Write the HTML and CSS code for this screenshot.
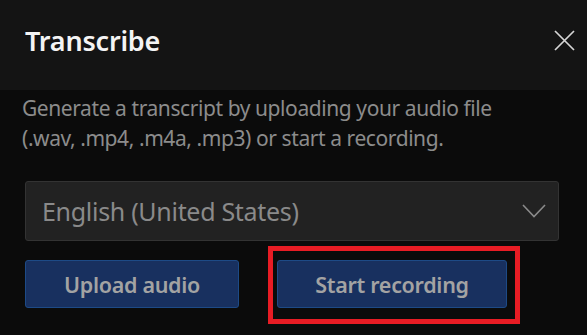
FILE: index.html
```html
<!DOCTYPE html>
<html lang="en">
<head>
    <meta charset="UTF-8">
    <meta name="viewport" content="width=device-width, initial-scale=1.0">
    <title>Transcribe</title>
    <link rel="stylesheet" href="styles.css">
</head>
<body>
    <div class="header">
        <h2>Transcribe</h2>
        <button class="close" aria-label="Close">
            <svg width="21" height="21" viewBox="0 0 21 21">
                <path d="M1 1 L20 20 M20 1 L1 20" stroke="#d6d6d6" stroke-width="1.7" fill="none"/>
            </svg>
        </button>
    </div>
    <div class="content">
        <p class="desc">Generate a transcript by uploading your audio file (.wav, .mp4, .m4a, .mp3) or start a recording.</p>
        <div class="select">
            <span>English (United States)</span>
            <svg width="24" height="14" viewBox="0 0 24 14">
                <path d="M1 1 L12 12.5 L23 1" stroke="#8a8a8a" stroke-width="1.6" fill="none"/>
            </svg>
        </div>
        <div class="actions">
            <button class="btn upload">Upload audio</button>
            <div class="highlight">
                <button class="btn record">Start recording</button>
            </div>
        </div>
    </div>
</body>
</html>
```

FILE: styles.css
```css
body {
    margin: 0;
    font-family: "Noto Sans", "Open Sans", sans-serif;
    background-color: #0b0b0b;
    width: 587px;
    height: 335px;
    overflow: hidden;
}
.header {
    height: 90px;
    background: #141414;
    display: flex;
    align-items: center;
    justify-content: space-between;
    padding: 0 12px 10px 25px;
    box-sizing: border-box;
}
h2 {
    margin: 0;
    font-size: 27px;
    font-weight: 600;
    color: #f4f4f4;
    letter-spacing: -0.2px;
}
.close {
    background: none;
    border: none;
    padding: 0;
    width: 21px;
    height: 21px;
    cursor: pointer;
}
.close svg {
    display: block;
}
.content {
    padding: 3px 28px 0 25px;
}
.desc {
    margin: 0 0 0 -3px;
    max-width: 480px;
    font-size: 21px;
    line-height: 30px;
    color: #8c8c8c;
    letter-spacing: -0.42px;
}
.select {
    margin-top: 28px;
    height: 60px;
    box-sizing: border-box;
    background: #222222;
    border: 1px solid #333333;
    border-radius: 3px;
    display: flex;
    align-items: center;
    justify-content: space-between;
    padding: 0 12px 0 16px;
    font-size: 25px;
    color: #8a8a8a;
    letter-spacing: -0.3px;
}
.select svg {
    display: block;
}
.actions {
    margin-top: 19px;
    display: flex;
    gap: 38px;
}
.btn {
    height: 48px;
    box-sizing: border-box;
    background: #18305f;
    border: 1px solid #1d4a86;
    border-radius: 3px;
    color: #a3a3a3;
    font-family: "Noto Sans", "Open Sans", sans-serif;
    font-size: 21.5px;
    font-weight: 600;
    letter-spacing: -0.3px;
    cursor: pointer;
    padding: 0;
}
.upload {
    width: 214px;
}
.record {
    width: 230px;
}
.highlight {
    position: relative;
}
.highlight::after {
    content: "";
    position: absolute;
    left: -9px;
    top: -14px;
    width: 252px;
    height: 78px;
    box-sizing: border-box;
    border: 5px solid #e81c24;
    pointer-events: none;
}
```
